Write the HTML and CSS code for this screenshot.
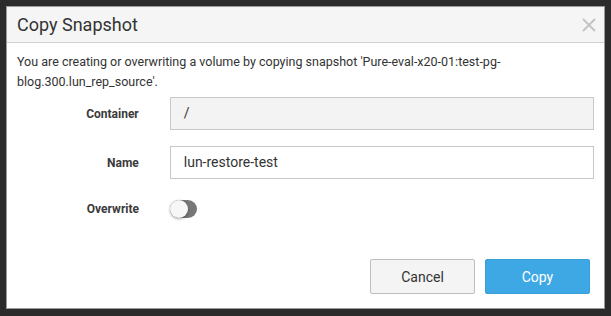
FILE: index.html
```html
<!DOCTYPE html>
<html lang="en">
<head>
  <meta charset="UTF-8" />
  <title>Copy Snapshot</title>
  <link rel="stylesheet" href="styles.css">
</head>
<body>
  <div class="modal">
    <div class="modal-header">
      <h3>Copy Snapshot</h3>
      <svg class="close" width="14" height="14" viewBox="0 0 14 14">
        <path d="M1 1 L13 13 M13 1 L1 13" stroke="#c2c2c2" stroke-width="1.8" fill="none" />
      </svg>
    </div>

    <div class="modal-body">
      <p class="intro">
        You are creating or overwriting a volume by copying snapshot 'Pure-eval-x20-01:test-pg-<br>blog.300.lun_rep_source'.
      </p>

      <div class="form-row">
        <label>Container</label>
        <div class="field readonly">/</div>
      </div>
      <div class="form-row">
        <label>Name</label>
        <div class="field">lun-restore-test</div>
      </div>
      <div class="form-row toggle-row">
        <label>Overwrite</label>
        <span class="toggle"><span class="knob"></span></span>
      </div>
    </div>

    <div class="modal-footer">
      <button class="btn">Cancel</button>
      <button class="btn btn-primary">Copy</button>
    </div>
  </div>
</body>
</html>
```

FILE: styles.css
```css
body {
  margin: 0;
  padding: 6px 0 0 6px;
  background: #2b2b2b;
  font-family: "Roboto", "Liberation Sans", sans-serif;
  color: #333;
  height: 316px;
  box-sizing: border-box;
  overflow: hidden;
}

.modal {
  width: 597px;
  height: 301px;
  background: #fff;
  border: 1px solid #9a9a9a;
  display: flex;
  flex-direction: column;
}

.modal-header {
  height: 35px;
  background: #f5f5f5;
  border-bottom: 1px solid #d0d0d0;
  display: flex;
  align-items: center;
  justify-content: space-between;
  padding: 0 8px 0 10px;
}

.modal-header h3 {
  margin: 0;
  font-size: 18px;
  font-weight: 400;
  color: #333;
}

.modal-body {
  padding: 9px 10px 0 10px;
  flex: 1;
}

.intro {
  margin: 0 0 5px;
  font-size: 12.5px;
  line-height: 20px;
}

.form-row {
  display: flex;
  align-items: center;
  margin-bottom: 16px;
}

.form-row label {
  width: 122px;
  text-align: right;
  font-size: 12px;
  font-weight: 700;
  color: #3a3a3a;
  margin-right: 31px;
}

.field {
  width: 397px;
  height: 31px;
  border: 1px solid #c8c8c8;
  padding: 0 13px;
  font-size: 14px;
  line-height: 31px;
  color: #333;
}

.field.readonly {
  background: #f3f3f3;
}

/* sits a bit lower than the text rows */
.toggle-row {
  padding-top: 5px;
}

.toggle {
  width: 27px;
  height: 18px;
  border-radius: 9px;
  background: #777;
  position: relative;
  display: inline-block;
}

.knob {
  position: absolute;
  left: 0;
  top: 0;
  width: 18px;
  height: 18px;
  border-radius: 50%;
  background: #f7f7f7;
  box-shadow: 0 1px 3px rgba(0, 0, 0, 0.35);
}

.modal-footer {
  display: flex;
  justify-content: flex-end;
  gap: 10px;
  padding: 0 14px 14px 0;
}

.btn {
  width: 105px;
  height: 35px;
  border: 1px solid #bdbdbd;
  border-radius: 2px;
  background: #f4f4f4;
  font-family: inherit;
  font-size: 14px;
  color: #333;
}

.btn-primary {
  background: #3ea8e5;
  border-color: #3a9fd9;
  color: #fff;
}
```
